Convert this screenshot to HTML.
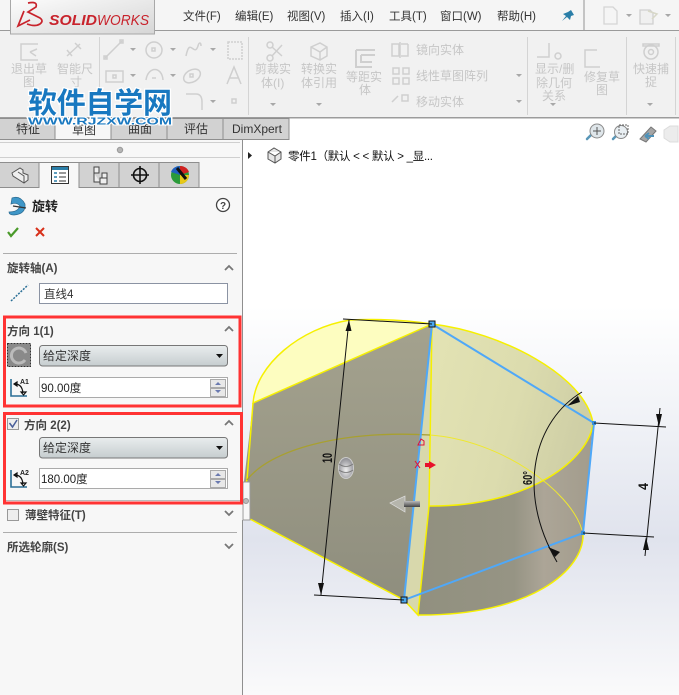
<!DOCTYPE html>
<html><head><meta charset="utf-8"><style>
html,body{margin:0;padding:0;background:#fff;width:679px;height:695px;overflow:hidden}
svg{display:block;font-family:"Liberation Sans","Noto Sans CJK SC",sans-serif}
.m{font-size:11.5px;fill:#333}
.g{font-size:12px;fill:#c6c6c6}
.b{font-size:11.5px;font-weight:bold;fill:#444}
.t{font-size:12px;fill:#333}
.v{font-size:11.5px;fill:#222}
.ic{fill:none;stroke:#cfcfcf;stroke-width:1.5}
</style></head><body>
<svg width="679" height="695" viewBox="0 0 679 695" xmlns="http://www.w3.org/2000/svg">
<defs>
<linearGradient id="bg" x1="0" y1="0" x2="0" y2="1"><stop offset="0" stop-color="#fff"/><stop offset=".3" stop-color="#fff"/><stop offset=".52" stop-color="#eff1f6"/><stop offset=".72" stop-color="#e0e3ed"/><stop offset=".9" stop-color="#f1f2f6"/><stop offset="1" stop-color="#fafafb"/></linearGradient>
<linearGradient id="gf" x1="0" y1="0" x2="0" y2="1"><stop offset="0" stop-color="#a4a28e"/><stop offset="1" stop-color="#8f8e7e"/></linearGradient>
<linearGradient id="top" x1="0" y1="0" x2="1" y2=".3"><stop offset="0" stop-color="#e3e3b4"/><stop offset=".6" stop-color="#dcdcae"/><stop offset="1" stop-color="#cfcfa6"/></linearGradient>
<linearGradient id="side" x1="0" y1="0" x2="1" y2="0"><stop offset="0" stop-color="#91907f"/><stop offset=".55" stop-color="#969484"/><stop offset=".72" stop-color="#aca597"/><stop offset="1" stop-color="#a29c8c"/></linearGradient>
<linearGradient id="sel" x1="0" y1="0" x2="0" y2="1"><stop offset="0" stop-color="#e9edee"/><stop offset="1" stop-color="#c6cdcf"/></linearGradient>
<linearGradient id="logo" x1="0" y1="0" x2="1" y2="1"><stop offset="0" stop-color="#fcfcfc"/><stop offset="1" stop-color="#d6d6d6"/></linearGradient>
<linearGradient id="shaft" x1="0" y1="0" x2="0" y2="1"><stop offset="0" stop-color="#bbb"/><stop offset="1" stop-color="#444"/></linearGradient>
<radialGradient id="ball" cx=".5" cy=".6" r=".6"><stop offset="0" stop-color="#f0f0f0"/><stop offset="1" stop-color="#8a8a90"/></radialGradient>
</defs>

<!-- viewport -->
<rect x="243" y="140" width="436" height="555" fill="url(#bg)"/>

<!-- model -->
<path d="M432 324Q392 318 350 320C300 328 256 365 253 403Z" fill="#fdfdc0"/>
<path d="M253 403L432 324L404 600L250 519L243 519L243 490Z" fill="url(#gf)"/>
<path d="M429 506C530 507 590 458 593 423L583 533C585 570 530 616 418 615Z" fill="url(#side)"/>
<path d="M432 324C500 332 585 375 593 423C590 458 530 507 429 506Z" fill="url(#top)"/>
<path d="M432 324L404 600L418 615L429 506Z" fill="#d8d8ac"/>
<g fill="none" stroke="#f6f000" stroke-width="1.500">
<path d="M253 403L247 480L243 490M250 519L404 600L418 615L429 506L432 324"/>
<path d="M432 324C500 332 585 375 593 423C590 458 530 507 429 506"/>
<path d="M432 324Q392 318 350 320C300 328 256 365 253 403L432 324"/>
<path d="M583 533C585 570 530 616 418 615"/>
</g>
<path d="M247 480C270 450 340 430 430 435" fill="none" stroke="#a8a030" stroke-width="1.300"/>
<path d="M430 435C500 440 570 490 582 530" fill="none" stroke="#efe830" stroke-width="1"/>
<path d="M432 324L594 423L583 533L404 600Z" fill="none" stroke="#4fa8f8" stroke-width="2"/>
<rect x="429" y="321" width="6" height="6" fill="#4aa8f0" stroke="#111"/>
<rect x="401" y="597" width="6" height="6" fill="#4aa8f0" stroke="#111"/>
<rect x="592" y="421" width="4" height="4" fill="#3a90d8"/>
<rect x="581" y="531" width="4" height="4" fill="#3a90d8"/>

<!-- dimensions -->
<g fill="none" stroke="#111" stroke-width="1">
<path d="M343 319L432 324M314 595L404 600M349 320L321 595"/>
<path d="M594 423L666 427M583 533L654 537M660 408L645 556"/>
<path d="M582 392C535 420 515 490 557 562"/>
</g>
<path d="M349 320L351.500 331L345.500 331ZM321 595L318 583L324 583ZM659 427L656 414L662 414ZM646 537L643 550L649 550Z" fill="#111"/>
<path d="M567 406L578 396L580 402ZM548 547L560 552L555 557Z" fill="#111"/>
<text transform="translate(332,463) rotate(-90)" font-size="14" font-weight="bold" fill="#111" textLength="10" lengthAdjust="spacingAndGlyphs">10</text>
<text transform="translate(648,490) rotate(-90)" font-size="14" font-weight="bold" fill="#111" textLength="7" lengthAdjust="spacingAndGlyphs">4</text>
<text transform="translate(532,485) rotate(-90)" font-size="13" font-weight="bold" fill="#111" textLength="14" lengthAdjust="spacingAndGlyphs">60°</text>

<!-- triad / markers -->
<ellipse cx="346" cy="468" rx="7.500" ry="10.500" fill="url(#ball)" stroke="#ccc"/>
<path d="M339 464Q346 469 353 464M339 470Q346 475 353 470" fill="none" stroke="#777" stroke-width=".8"/>
<path d="M390 503L405 496L405 512Z" fill="#b5b5ac" stroke="#ddd" stroke-width=".7"/>
<rect x="404" y="501" width="16" height="6" fill="url(#shaft)"/>
<path d="M418 445L424 445L424 441L421 439Z" fill="none" stroke="#e0103a"/>
<path d="M415 461L420 468M420 461L415 468" fill="none" stroke="#e0103a"/>
<path d="M425 463H429V461L436 465L429 469V467H425Z" fill="#e8102a"/>

<!-- top right view icons -->
<g fill="none" stroke="#5a97b8" stroke-width="2.500" stroke-linecap="round"><path d="M587 139L592 134M613 139L618 134"/></g>
<circle cx="597" cy="131" r="7" fill="#dfe6ea" stroke="#8a8a8a"/>
<path d="M597 127v8M593 131h8" stroke="#555" stroke-width="1"/>
<circle cx="621" cy="132" r="6.500" fill="#e8eef2" stroke="#8a8a8a"/>
<rect x="619" y="125" width="9" height="9" fill="none" stroke="#666" stroke-dasharray="2 1"/>
<path d="M640 139L651 127L656 131L646 142Z" fill="#a5a5a5" stroke="#777"/>
<path d="M645 136H654M645 136L649 133M645 136L649 139" stroke="#4e91b8" stroke-width="2" fill="none"/>
<path d="M664 130L670 126L678 126V142L670 142L664 138Z" fill="#ececec" stroke="#dcdcdc"/>

<!-- header -->
<rect x="0" y="0" width="679" height="30" fill="#f5f5f5"/>
<rect x="0" y="30" width="679" height="88" fill="#f1f1f1"/>
<rect x="0" y="30" width="679" height="1" fill="#9a9a9a"/>
<rect x="0" y="117" width="679" height="1.500" fill="#9c9c9c"/>
<rect x="583" y="0" width="2" height="30" fill="#c4c4c4"/>
<rect x="10.500" y="-1" width="144" height="35" fill="url(#logo)" stroke="#a8a8a8"/>
<path d="M28 3Q38 1 36 7L28 12L40 18Q44 21 40 24Q35 27 27 24M24 11L18 26L30 20" fill="none" stroke="#c8232c" stroke-width="1.700"/>
<text x="49" y="25" font-size="15" font-weight="bold" font-style="italic" fill="#c8232c" textLength="48" lengthAdjust="spacingAndGlyphs">SOLID</text>
<text x="97" y="25" font-size="15" font-style="italic" fill="#c8232c" textLength="52" lengthAdjust="spacingAndGlyphs">WORKS</text>

<text class="m" x="183" y="20">文件(F)</text>
<text class="m" x="235" y="20">编辑(E)</text>
<text class="m" x="287" y="20">视图(V)</text>
<text class="m" x="340" y="20">插入(I)</text>
<text class="m" x="389" y="20">工具(T)</text>
<text class="m" x="440" y="20">窗口(W)</text>
<text class="m" x="497" y="20">帮助(H)</text>
<path d="M562 21L566 16L563 14L568 12L571 10L574 15L571 16L570 20L567 17Z" fill="#2a7ea8"/>
<path d="M604 7H613L617 11V24H604Z" fill="#f5f5f5" stroke="#d5d5d5" stroke-width="1.300"/>
<path d="M626 14h6l-3 3Z M665 14h6l-3 3Z" fill="#a8a8a8"/>
<path d="M640 10H650L653 13V24H640Z" fill="#f0f0f0" stroke="#d0d0d0" stroke-width="1.300"/>
<path d="M648 11L657 14L652 19" fill="none" stroke="#d8d8c8" stroke-width="1.500"/>

<!-- toolbar dividers -->
<g fill="#d4d4d4"><rect x="99" y="37" width="1" height="78"/><rect x="248" y="37" width="1" height="78"/><rect x="527" y="37" width="1" height="78"/><rect x="626" y="37" width="1" height="78"/><rect x="675" y="37" width="1" height="78"/></g>

<!-- toolbar icons -->
<g class="ic">
<path d="M38 44H21V60H38"/><path d="M30 52L37 49M30 52L36 56"/>
<path d="M67 56L80 44M67 50L72 56M75 43L81 49"/>
<path d="M105 58L122 41"/><rect x="104" y="56" width="3" height="3"/><rect x="120" y="40" width="3" height="3"/>
<circle cx="154" cy="50" r="8"/><rect x="152" y="48" width="3" height="3"/>
<path d="M186 56C190 36 194 58 198 46C199 42 201 42 201 46"/>
<rect x="228" y="42" width="14" height="17" stroke-dasharray="2 1"/>
<rect x="106" y="71" width="17" height="11"/><rect x="113" y="75" width="3" height="3"/>
<path d="M146 80C148 66 162 66 163 80"/><path d="M152 78h4"/>
<ellipse cx="192" cy="76" rx="9" ry="6" transform="rotate(-30 192 76)"/><rect x="190" y="74" width="3" height="3"/>
<path d="M227 84L234 67L241 84M230 78H238"/>
<path d="M186 94H196Q202 94 202 102V110"/>
<rect x="232" y="99" width="4" height="4"/>
<circle cx="270" cy="45" r="3"/><circle cx="270" cy="58" r="3"/><path d="M272 47L282 56M272 56L282 45"/>
<path d="M311 47L320 43L327 47V56L320 60L311 56ZM311 47L320 52L327 47M320 52V60"/>
<path d="M356 50H375M356 50V67H372M361 55H375M361 55V62H372" stroke-width="2"/>
<path d="M392 44H399V56H392ZM408 44H401M408 44V56H401M400 42V58"/>
<path d="M393 68H399V74H393ZM403 68H409V74H403ZM393 78H399V84H393ZM403 78H409V84H403Z"/>
<rect x="402" y="95" width="6" height="6"/><path d="M392 102L398 96"/>
<path d="M549 43V57H537"/><circle cx="558" cy="56" r="3"/>
<path d="M597 50H585V67H600"/>
<rect x="643" y="44" width="16" height="2"/><circle cx="651" cy="52" r="7"/><circle cx="651" cy="52" r="2.500"/>
</g>
<g fill="#a8a8a8"><path d="M130 48h6l-3 3ZM170 48h6l-3 3ZM210 48h6l-3 3ZM130 74h6l-3 3ZM170 74h6l-3 3ZM210 100h6l-3 3ZM270 103h6l-3 3ZM316 103h6l-3 3ZM516 74h6l-3 3ZM516 100h6l-3 3ZM550 103h6l-3 3ZM647 103h6l-3 3Z"/></g>

<!-- toolbar text -->
<text class="g" x="11" y="73">退出草</text><text class="g" x="23" y="86">图</text>
<text class="g" x="57" y="73">智能尺</text><text class="g" x="70" y="86">寸</text>
<text class="g" x="255" y="73">剪裁实</text><text class="g" x="261" y="87">体(I)</text>
<text class="g" x="301" y="73">转换实</text><text class="g" x="301" y="87">体引用</text>
<text class="g" x="346" y="81">等距实</text><text class="g" x="359" y="94">体</text>
<text class="g" x="416" y="54">镜向实体</text>
<text class="g" x="416" y="80">线性草图阵列</text>
<text class="g" x="416" y="106">移动实体</text>
<text class="g" x="535" y="73">显示/删</text><text class="g" x="536" y="87">除几何</text><text class="g" x="542" y="100">关系</text>
<text class="g" x="584" y="81">修复草</text><text class="g" x="596" y="94">图</text>
<text class="g" x="633" y="73">快速捕</text><text class="g" x="645" y="86">捉</text>

<!-- tabs -->
<g stroke="#8e8e8e" fill="#d2d2d2">
<rect x="-1" y="118.500" width="56" height="21"/><rect x="111" y="118.500" width="56" height="21"/><rect x="167" y="118.500" width="56" height="21"/><rect x="223" y="118.500" width="66" height="21"/>
<rect x="55" y="118.500" width="56" height="21" fill="#f6f6f6"/>
</g>
<text class="t" x="16" y="133">特征</text><text class="t" x="72" y="134">草图</text><text class="t" x="128" y="133">曲面</text><text class="t" x="184" y="133">评估</text><text class="t" x="232" y="133">DimXpert</text>

<!-- watermark -->
<text x="28" y="113" font-size="29" font-weight="bold" fill="#1878c0" stroke="#fff" stroke-width="2.500" paint-order="stroke" textLength="144">软件自学网</text>
<text x="28" y="124.500" font-size="10.500" font-weight="bold" fill="#1878c0" stroke="#fff" stroke-width="2" paint-order="stroke" textLength="144" lengthAdjust="spacingAndGlyphs">WWW.RJZXW.COM</text>

<!-- panel -->
<rect x="0" y="140" width="242" height="555" fill="#f7f7f7"/>
<rect x="242" y="139" width="1" height="343" fill="#8f8f8f"/>
<rect x="242" y="520" width="1" height="175" fill="#8f8f8f"/>
<path d="M243 482H250V520H243Z" fill="#f7f7f7" stroke="#999"/>
<circle cx="246" cy="501" r="2.500" fill="#bbb" stroke="#999"/>
<rect x="0" y="142" width="240" height="1" fill="#cfcfcf"/>
<rect x="0" y="157" width="240" height="1" fill="#cfcfcf"/>
<circle cx="120" cy="150" r="2.700" fill="#b5b5b5" stroke="#999"/>
<rect x="0" y="187" width="242" height="1" fill="#a0a0a0"/>
<g stroke="#8e8e8e" fill="#d2d2d2">
<rect x="-1" y="162.500" width="40" height="25"/><rect x="79" y="162.500" width="40" height="25"/><rect x="119" y="162.500" width="40" height="25"/><rect x="159" y="162.500" width="40" height="25"/>
<path d="M39 188V162.500H79V188" fill="#f7f7f7"/>
</g>
<path d="M12 173L20 168L23 170L23 173L28 175V180L24 183L13 176Z" fill="#eee" stroke="#555"/>
<path d="M18 172L24 176V183" stroke="#555" fill="none"/>
<rect x="51.500" y="166.500" width="17" height="17" fill="#fff" stroke="#333"/><rect x="52" y="167" width="16" height="3" fill="#2a7ea8"/>
<path d="M54 173h3M54 177h3M54 181h3" stroke="#2a7ea8" stroke-width="1.500"/><path d="M59 173h7M59 177h7M59 181h7" stroke="#333"/>
<path d="M94 167h5v6h-5ZM94 173v9h6M102 173h5v5h-5ZM100 178h7v6h-7Z" fill="#eee" stroke="#444"/>
<circle cx="140" cy="175" r="6.500" fill="none" stroke="#111" stroke-width="1.600"/><path d="M140 166V184M131 175H149" stroke="#111" stroke-width="1.600"/>
<circle cx="180" cy="175" r="9" fill="#2a9a3a"/><path d="M180 175L171 172A9 9 0 0 1 180 166Z" fill="#2060c0"/><path d="M180 175V166A9 9 0 0 1 189 172Z" fill="#d02020"/><path d="M180 175H189A9 9 0 0 1 180 184Z" fill="#e8c818"/><path d="M177 168L186 179" stroke="#111" stroke-width="3"/>

<!-- title -->
<path d="M12 198Q20 195 25 204Q26 214 14 215Q9 215 9 212Q18 212 20 206Q17 202 11 204Z" fill="#3f97c8" stroke="#2a6a90" stroke-width=".7"/>
<path d="M13 206L26 208" stroke="#333" stroke-width="1.300"/>
<text x="32" y="211" font-size="13" font-weight="bold" fill="#222">旋转</text>
<circle cx="223" cy="205" r="6.500" fill="#fff" stroke="#444" stroke-width="1.300"/>
<text x="220" y="209" font-size="10" font-weight="bold" fill="#444">?</text>
<path d="M8 232L11 236L18 228" fill="none" stroke="#4a9a2a" stroke-width="2.200"/>
<path d="M36 228L44 236M44 228L36 236" stroke="#d8301a" stroke-width="2"/>
<rect x="3" y="253" width="234" height="1" fill="#adadad"/>

<text class="b" x="7" y="272">旋转轴(A)</text>
<path d="M225 270L229 266L233 270" fill="none" stroke="#777" stroke-width="1.800"/>
<path d="M11 301L28 285" stroke="#2a6f96" stroke-width="1.500" stroke-dasharray="2 1.300"/>
<rect x="39.500" y="283.500" width="188" height="20" fill="#fff" stroke="#8b93a3"/>
<text class="t" x="44" y="298" style="font-size:11.5px">直线4</text>

<!-- dir 1 -->
<text class="b" x="7" y="335">方向 1(1)</text>
<path d="M225 331L229 327L233 331" fill="none" stroke="#777" stroke-width="1.800"/>
<rect x="7.500" y="343.500" width="23" height="23" fill="#8a8a8a" stroke="#333" stroke-dasharray="2 1"/>
<path d="M26 353A7.500 7.500 0 1 0 25 360" fill="none" stroke="#bbb" stroke-width="3"/>
<rect x="39.500" y="345.500" width="188" height="20.500" rx="3" fill="url(#sel)" stroke="#777"/>
<text class="t" x="43" y="360">给定深度</text>
<path d="M216 354h7l-3.500 4Z" fill="#111"/>
<path d="M11 379V396H27" fill="none" stroke="#2a6f96" stroke-width="1.600"/>
<path d="M15 384Q22 384 23 393M14 384l3-2v4ZM21 392h5l-2.500 3Z" fill="none" stroke="#111" stroke-width="1.200"/>
<text x="20" y="384" font-size="7" font-weight="bold" fill="#222">A1</text>
<rect x="39.500" y="377.500" width="188" height="20" fill="#fff" stroke="#aaa"/>
<text class="v" x="41" y="392">90.00度</text>
<rect x="210.500" y="379.500" width="15" height="8" fill="#e8e8e8" stroke="#aaa"/><rect x="210.500" y="388.500" width="15" height="8" fill="#e8e8e8" stroke="#aaa"/>
<path d="M215 385l3-3 3 3ZM215 390l3 3 3-3Z" fill="#6a7ab0"/>
<rect x="4.500" y="317" width="235.500" height="89" fill="none" stroke="#ff3333" stroke-width="3"/>

<!-- dir 2 -->
<rect x="7.500" y="418.500" width="11" height="11" fill="#eee" stroke="#999"/>
<path d="M9.500 423L12.500 427L17 420" fill="none" stroke="#4a5f9a" stroke-width="1.500"/>
<text class="b" x="24" y="429">方向 2(2)</text>
<path d="M225 425L229 421L233 425" fill="none" stroke="#777" stroke-width="1.800"/>
<rect x="39.500" y="437.500" width="188" height="20.500" rx="3" fill="url(#sel)" stroke="#777"/>
<text class="t" x="43" y="452">给定深度</text>
<path d="M216 446h7l-3.500 4Z" fill="#111"/>
<path d="M11 470V487H27" fill="none" stroke="#2a6f96" stroke-width="1.600"/>
<path d="M15 475Q22 475 23 484M14 475l3-2v4ZM21 483h5l-2.500 3Z" fill="none" stroke="#111" stroke-width="1.200"/>
<text x="20" y="475" font-size="7" font-weight="bold" fill="#222">A2</text>
<rect x="39.500" y="468.500" width="188" height="20" fill="#fff" stroke="#aaa"/>
<text class="v" x="41" y="483">180.00度</text>
<rect x="210.500" y="470.500" width="15" height="8" fill="#e8e8e8" stroke="#aaa"/><rect x="210.500" y="479.500" width="15" height="8" fill="#e8e8e8" stroke="#aaa"/>
<path d="M215 476l3-3 3 3ZM215 481l3 3 3-3Z" fill="#6a7ab0"/>
<rect x="6" y="500" width="234" height="1" fill="#bbb"/>
<rect x="4.500" y="413.500" width="237" height="89.500" fill="none" stroke="#ff3333" stroke-width="3"/>

<!-- thin, selected -->
<rect x="7.500" y="509.500" width="11" height="11" fill="#eee" stroke="#999"/>
<text class="b" x="25" y="519">薄壁特征(T)</text>
<path d="M225 511L229 515L233 511" fill="none" stroke="#777" stroke-width="1.800"/>
<rect x="3" y="532" width="234" height="1" fill="#adadad"/>
<text class="b" x="7" y="551">所选轮廓(S)</text>
<path d="M225 544L229 548L233 544" fill="none" stroke="#777" stroke-width="1.800"/>

<!-- tree -->
<path d="M248 152l4 3.500-4 3.500Z" fill="#222"/>
<path d="M268 152L274 148L281 152V159L275 163L268 159ZM268 152L275 156L281 152M275 156V163" fill="#e6e6e6" stroke="#555"/>
<text x="288" y="160" font-size="11.500" fill="#111" textLength="145">零件1（默认 &lt; &lt; 默认 &gt; _显...</text>
</svg>
</body></html>
